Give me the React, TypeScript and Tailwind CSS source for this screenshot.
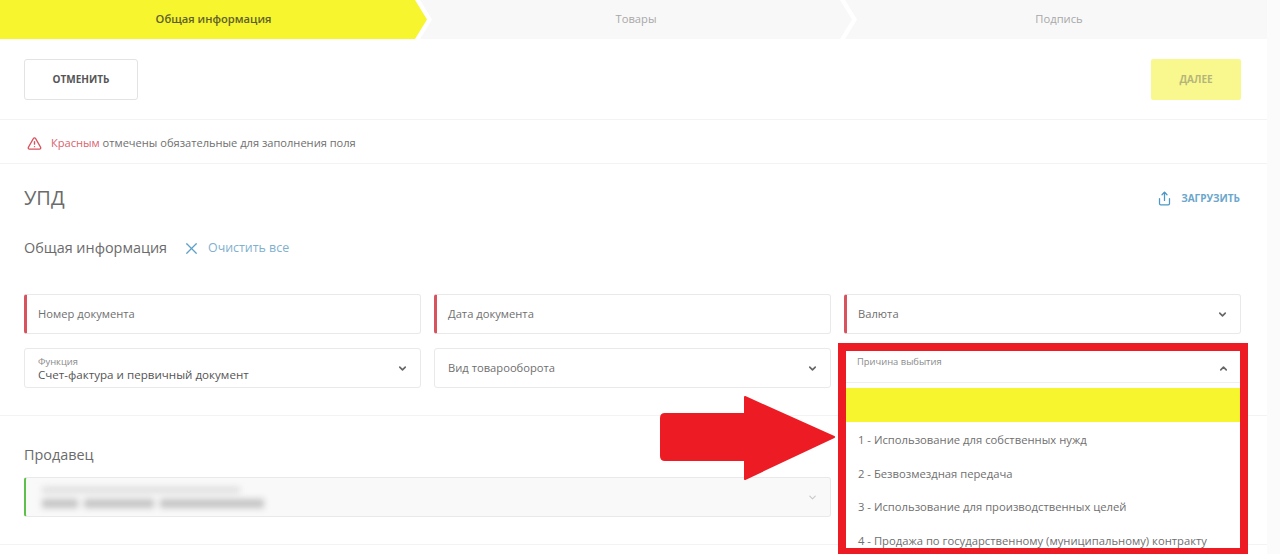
import { ChevronDown, ChevronUp, Share, TriangleAlert, X } from 'lucide-react';

const options = [
  '1 - Использование для собственных нужд',
  '2 - Безвозмездная передача',
  '3 - Использование для производственных целей',
  '4 - Продажа по государственному (муниципальному) контракту',
];

const Field = ({
  label,
  required,
  select,
}: {
  label: string;
  required?: boolean;
  select?: boolean;
}) => (
  <div
    className={`flex h-[40px] items-center justify-between rounded-[3px] border border-[#e9e9e9] pr-[12px] text-[11.2px] text-[#6f6f6f] ${
      required ? 'border-l-[3px] border-l-[#d9535f] pl-[11px]' : 'pl-[13px]'
    }`}
  >
    <span className="pt-[1px]">{label}</span>
    {select && <ChevronDown size={11} strokeWidth={3.5} className="text-[#666666]" />}
  </div>
);

const App = () => {
  return (
    <div
      className="relative h-[554px] w-[1280px] overflow-hidden bg-[#fbfbfb] text-[#6f6f6f]"
      style={{ fontFamily: '"Open Sans", "Noto Sans", sans-serif' }}
    >
      <div className="h-full w-[1267px] bg-white">
        {/* шаги */}
        <div className="flex h-[39px] text-[11.2px]">
          <div className="z-10 flex w-[427px] items-center justify-center bg-[#f6f52e] font-semibold text-[#5f5f2a] [clip-path:polygon(0_0,415px_0,100%_50%,415px_100%,0_100%)]">
            Общая информация
          </div>
          <div className="-ml-[7px] flex w-[432px] items-center justify-center bg-[#f8f8f8] text-[#a8a8a8] [clip-path:polygon(0_0,calc(100%-12px)_0,100%_50%,calc(100%-12px)_100%,0_100%,12px_50%)]">
            Товары
          </div>
          <div className="-ml-[7px] flex flex-1 items-center justify-center bg-[#f8f8f8] pl-[6px] text-[#a8a8a8] [clip-path:polygon(0_0,100%_0,100%_100%,0_100%,12px_50%)]">
            Подпись
          </div>
        </div>

        {/* кнопки */}
        <div className="flex h-[81px] items-center justify-between border-b border-[#f3f3f3] pr-[26px] pl-[24px]">
          <button className="h-[41px] w-[114px] rounded-[3px] border border-[#e3e3e3] text-[10px] font-bold text-[#555555]">
            ОТМЕНИТЬ
          </button>
          <button className="h-[41px] w-[90px] rounded-[2px] bg-[#f9f88f] text-[10px] font-bold text-[#b5b57a]">
            ДАЛЕЕ
          </button>
        </div>

        <div className="flex h-[44px] items-center gap-[9px] border-b border-[#f3f3f3] pt-[3px] pl-[27px] text-[11.1px]">
          <TriangleAlert size={15} strokeWidth={2.25} className="text-[#d9535f]" />
          <span>
            <span className="text-[#d9636d]">Красным</span> отмечены обязательные для заполнения поля
          </span>
        </div>

        <div className="pr-[26px] pl-[24px]">
          <div className="flex h-[68px] items-center justify-between">
            <h1 className="text-[20px] text-[#6b6b6b]">УПД</h1>
            <div className="flex items-center gap-[9px] pr-[1px] text-[10px] font-bold text-[#6ba6cc]">
              <Share size={15} strokeWidth={2} className="text-[#4d97c6]" />
              ЗАГРУЗИТЬ
            </div>
          </div>
          <div className="flex h-[32px] items-center">
            <h2 className="text-[14.4px] text-[#6b6b6b]">Общая информация</h2>
            <X size={19} strokeWidth={1.5} className="ml-[15px] text-[#5c9fc9]" />
            <span className="ml-[7px] text-[12.4px] text-[#7fb0cf]">Очистить все</span>
          </div>

          <div className="mt-[30px] grid grid-cols-3 gap-x-[13px] gap-y-[14px]">
            <Field label="Номер документа" required />
            <Field label="Дата документа" required />
            <Field label="Валюта" required select />
            <div className="flex h-[40px] items-center justify-between rounded-[3px] border border-[#e9e9e9] pr-[12px] pl-[13px]">
              <div className="flex flex-col pt-[2px]">
                <span className="text-[9.4px] leading-[11px] text-[#8a8a8a]">Функция</span>
                <span className="text-[11.6px] leading-[16px] font-medium text-[#555555]">
                  Счет-фактура и первичный документ
                </span>
              </div>
              <ChevronDown size={11} strokeWidth={3.5} className="text-[#666666]" />
            </div>
            <Field label="Вид товарооборота" select />

            {/* открытый список */}
            <div className="relative z-10 h-[40px]">
              <div className="flex h-[35px] items-start justify-between border-b border-[#efefef] bg-white pt-[8px] pr-[12px] pl-[13px]">
                <span className="text-[9.4px] leading-[11px] text-[#8a8a8a]">Причина выбытия</span>
                <ChevronUp size={11} strokeWidth={3.5} className="mt-[7px] text-[#666666]" />
              </div>
              <div className="absolute top-[40px] right-[1px] left-[2px] bg-white text-[11.25px] text-[#6f6f6f]">
                <div className="mb-[1.5px] h-[34px] bg-[#f6f52e]" />
                {options.map((option) => (
                  <div key={option} className="flex h-[33.7px] items-center pl-[12px] whitespace-nowrap">
                    {option}
                  </div>
                ))}
              </div>
              <div className="pointer-events-none absolute -top-[5px] -right-[7px] -left-[6px] h-[213px] border-[8px] border-[#ed1c24]" />
            </div>
          </div>
        </div>

        <div className="mt-[27px] border-t border-[#f3f3f3] pr-[26px] pl-[24px]">
          <h2 className="mt-[29px] text-[14.4px] leading-[20px] text-[#6b6b6b]">Продавец</h2>
          <div className="mt-[12px] flex h-[40px] w-[807px] items-center justify-between rounded-[3px] border border-[#e9e9e9] border-l-[2px] border-l-[#5ec04a] bg-[#f9f9f9] pr-[12px] pl-[16px]">
            <div className="flex flex-col gap-[6px] blur-[3px]">
              <div className="h-[6px] w-[198px] bg-[#dcdcdc]" />
              <div className="flex gap-[6px]">
                <div className="h-[9px] w-[36px] bg-[#c4c4c4]" />
                <div className="h-[9px] w-[70px] bg-[#c4c4c4]" />
                <div className="h-[9px] w-[104px] bg-[#c4c4c4]" />
              </div>
            </div>
            <ChevronDown size={11} strokeWidth={2.5} className="text-[#c9c9c9]" />
          </div>
        </div>
        <div className="mt-[27px] border-t border-[#f3f3f3]" />
      </div>

      {/* стрелка-пометка */}
      <svg className="absolute top-[394px] left-[660px] z-20" width="178" height="88" viewBox="0 0 178 88">
        <path
          d="M85 3 L174 43 L85 85 Z M5 20 H90 V66 H5 Q1 66 1 62 V24 Q1 20 5 20 Z"
          fill="#ed1c24"
          stroke="#ed1c24"
          strokeLinejoin="round"
          strokeWidth="2"
        />
      </svg>
    </div>
  );
};

export default App;
